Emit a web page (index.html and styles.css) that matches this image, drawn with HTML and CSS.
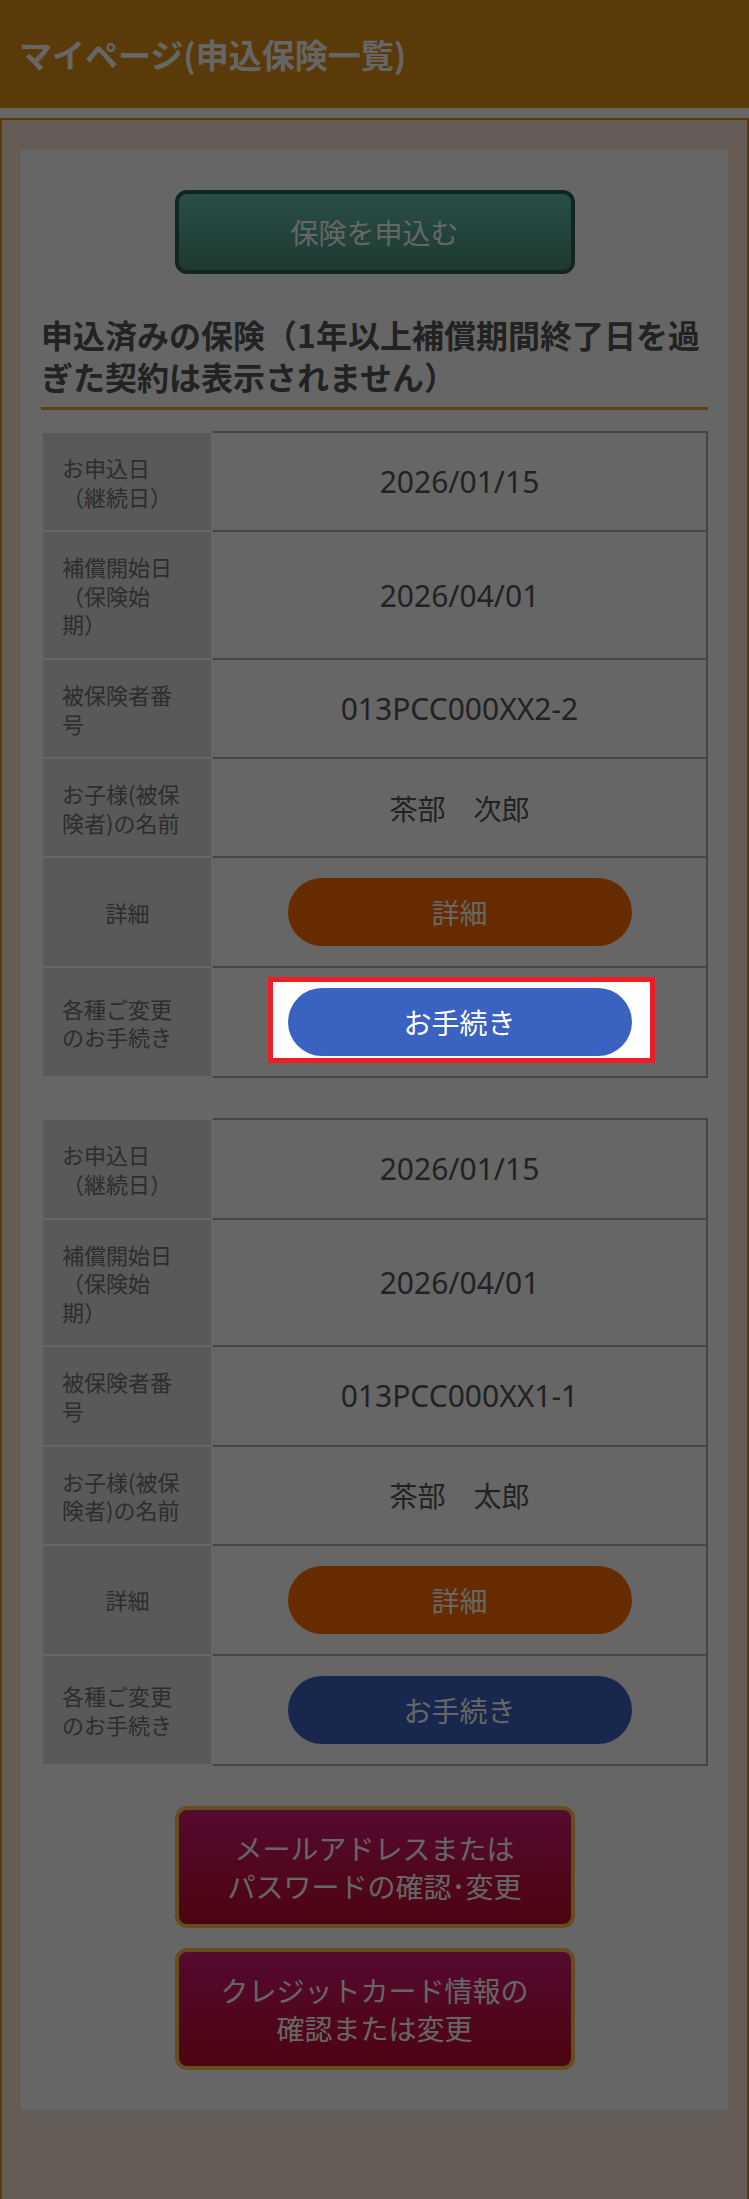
FILE: index.html
```html
<!DOCTYPE html>
<html lang="ja">
<head>
<meta charset="UTF-8">
<meta name="viewport" content="width=device-width, initial-scale=1.0">
<title>マイページ(申込保険一覧)</title>
<link rel="stylesheet" href="styles.css">
</head>
<body>
<header class="page-header">
    <h1>マイページ(申込保険一覧)</h1>
</header>

<div class="container">
    <div class="panel">
        <button class="apply-button">保険を申込む</button>

        <h2 class="section-title">申込済みの保険（1年以上補償期間終了日を過ぎた契約は表示されません）</h2>

        <table class="policy">
            <tr>
                <th>お申込日（継続日）</th>
                <td class="num">2026/01/15</td>
            </tr>
            <tr>
                <th>補償開始日（保険始期）</th>
                <td class="num">2026/04/01</td>
            </tr>
            <tr>
                <th>被保険者番号</th>
                <td class="num">013PCC000XX2-2</td>
            </tr>
            <tr>
                <th>お子様(被保険者)の名前</th>
                <td>茶部　次郎</td>
            </tr>
            <tr>
                <th class="center">詳細</th>
                <td><button class="pill detail">詳細</button></td>
            </tr>
            <tr>
                <th>各種ご変更のお手続き</th>
                <td>
                    <!-- highlighted step of the guide -->
                    <div class="spotlight">
                        <button class="pill procedure">お手続き</button>
                    </div>
                </td>
            </tr>
        </table>

        <table class="policy">
            <tr>
                <th>お申込日（継続日）</th>
                <td class="num">2026/01/15</td>
            </tr>
            <tr>
                <th>補償開始日（保険始期）</th>
                <td class="num">2026/04/01</td>
            </tr>
            <tr>
                <th>被保険者番号</th>
                <td class="num">013PCC000XX1-1</td>
            </tr>
            <tr>
                <th>お子様(被保険者)の名前</th>
                <td>茶部　太郎</td>
            </tr>
            <tr>
                <th class="center">詳細</th>
                <td><button class="pill detail">詳細</button></td>
            </tr>
            <tr>
                <th>各種ご変更のお手続き</th>
                <td><button class="pill procedure">お手続き</button></td>
            </tr>
        </table>

        <div class="account-links">
            <button class="account-button">メールアドレスまたは<br>パスワードの確認･変更</button>
            <button class="account-button">クレジットカード情報の<br>確認または変更</button>
        </div>
    </div>
</div>

<div class="overlay"></div>
</body>
</html>
```

FILE: styles.css
```css
:root {
    /* colors */
    --orange: #e19114;
    --line-orange: #f0a020;
    --cream: #fce6d4;
    --label-bg: #dedede;
    --cell-line: #aaaaaa;
    --text: #555555;
    --label-text: #707070;
    --detail: #ff6e00;
    --blue: #3a62c0;
    --red: #ee1c25;
    /* fonts */
    --font: "Noto Sans CJK JP", "Noto Sans", sans-serif;
    --num-font: "Noto Sans", "Noto Sans CJK JP", sans-serif;
}

body {
    margin: 0;
    font-family: var(--font);
    background-color: #fff;
    color: var(--text);
    text-spacing-trim: space-all;
}

button {
    font-family: inherit;
    cursor: pointer;
    color: #fff;
}

.page-header {
    background-color: var(--orange);
    height: 108px;
    display: flex;
    align-items: center;
    padding: 0 19px;
}

.page-header h1 {
    margin: 0;
    font-size: 33px;
    font-weight: bold;
    color: #fff;
}

.container {
    margin-top: 10px;
    border: 2px solid var(--orange);
    background-color: var(--cream);
    padding: 30px 19px 91px;
}

.panel {
    background-color: #fff;
    padding: 40px 20px;
}

.apply-button {
    display: block;
    margin: 0 auto;
    width: 400px;
    height: 84px;
    border: 4px solid #2d5f50;
    border-radius: 12px;
    background: linear-gradient(#64c3af, #4b917d);
    font-size: 28px;
}

.section-title {
    margin: 39px 0 21px;
    padding-bottom: 10px;
    border-bottom: 3px solid var(--line-orange);
    font-size: 32px;
    line-height: 42px;
    font-weight: bold;
    color: var(--text);
}

.policy {
    width: 100%;
    border-collapse: collapse;
    table-layout: fixed;
    margin-bottom: 40px;
}

.policy th {
    width: 131px;
    background-color: var(--label-bg);
    border: 2px solid #fff;
    padding: 20px 18px 20px 19px;
    font-size: 22px;
    line-height: 1.3;
    font-weight: normal;
    text-align: left;
    vertical-align: middle;
    color: var(--label-text);
}

.policy th.center {
    text-align: center;
}

.policy td {
    border: 2px solid var(--cell-line);
    padding: 20px 10px;
    font-size: 28px;
    text-align: center;
    vertical-align: middle;
}

.policy td.num {
    font-family: var(--num-font);
    font-size: 30px;
}

.pill {
    display: block;
    margin: 0 auto;
    width: 344px;
    height: 68px;
    border: none;
    border-radius: 34px;
    font-size: 28px;
}

.detail {
    background-color: var(--detail);
}

.procedure {
    background-color: var(--blue);
}

.account-links {
    display: flex;
    flex-direction: column;
    gap: 20px;
}

.account-button {
    display: block;
    margin: 0 auto;
    width: 400px;
    padding: 19px 0;
    border: 4px solid #ffc04a;
    border-radius: 12px;
    background: linear-gradient(#d41978, #c30a28);
    font-size: 28px;
    line-height: 38px;
}

/* guide overlay */
.overlay {
    position: fixed;
    inset: 0;
    background-color: rgba(0, 0, 0, 0.6);
    z-index: 100;
}

.spotlight {
    position: relative;
    z-index: 101;
    width: 344px;
    margin: 0 auto;
}

.spotlight::before {
    content: "";
    position: absolute;
    top: -11px;
    left: -20px;
    right: -23px;
    bottom: -7px;
    background-color: #fff;
    border: 5px solid var(--red);
    z-index: -1;
}

.spotlight .pill {
    position: relative;
}
```
